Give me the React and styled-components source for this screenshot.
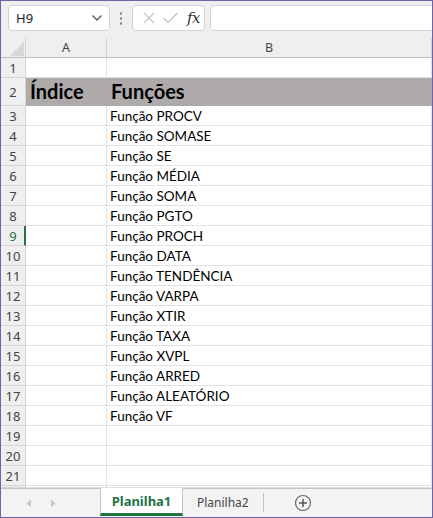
import React from "react";
import styled, { createGlobalStyle } from "styled-components";

const Global = createGlobalStyle`
  html, body { margin: 0; padding: 0; background: #fff; overflow: hidden; }
  * { box-sizing: border-box; }
`;

const UI = `"Noto Sans", "Open Sans", sans-serif`;
const CELL = `Lato, "Noto Sans", sans-serif`;

const Window = styled.div`
  width: 433px;
  height: 518px;
  border: 1px solid #6e64a8;
  background: #efefef;
  display: flex;
  flex-direction: column;
  overflow: hidden;
`;

const FormulaBar = styled.div`
  height: 37px;
  flex: none;
  display: flex;
  align-items: flex-start;
  padding: 4px 0 0 7px;
`;

const Box = styled.div`
  height: 26px;
  background: #fff;
  border: 1px solid #d3d3d3;
  border-radius: 4px;
  display: flex;
  align-items: center;
`;

const NameBox = styled(Box)`
  width: 102px;
  padding: 0 6px 0 7px;
  justify-content: space-between;
  font-family: ${UI};
  font-size: 13px;
  color: #222;
`;

const Dots = styled.div`
  width: 22px;
  height: 26px;
  display: flex;
  flex-direction: column;
  align-items: center;
  justify-content: center;
  gap: 2px;
  & > span {
    width: 2px;
    height: 3px;
    background: #8c8c8c;
    border-radius: 1px;
  }
`;

const FxBox = styled(Box)`
  width: 73px;
  padding: 0 0 0 9px;
  gap: 6px;
`;

const Fx = styled.span`
  font-family: "DejaVu Serif", "Liberation Serif", serif;
  font-style: italic;
  font-size: 15px;
  color: #333;
  margin-left: 2px;
  letter-spacing: -0.5px;
`;

const Input = styled(Box)`
  flex: 1;
  margin-left: 5px;
  margin-right: -6px;
`;

const Row = styled.div`
  display: flex;
  flex: ${(p) => (p.$fill ? "1" : "none")};
  height: ${(p) => (p.$fill ? "auto" : (p.$h || 20) + "px")};
`;

const RowHead = styled.div`
  width: 25px;
  flex: none;
  background: #efefef;
  border-right: ${(p) => (p.$sel ? "2px solid #217346" : "1px solid #d5d5d5")};
  border-bottom: 1px solid #d5d5d5;
  display: flex;
  align-items: center;
  justify-content: center;
  padding-left: ${(p) => (p.$sel ? "1px" : "0")};
  font-family: ${UI};
  font-size: 13px;
  color: ${(p) => (p.$sel ? "#217346" : "#444")};
`;

const Corner = styled(RowHead)`
  border-bottom: 1px solid #bdbdbd;
  align-items: flex-end;
  justify-content: flex-end;
  padding: 0 1px 1px 0;
`;

const ColHead = styled.div`
  width: ${(p) => (p.$w ? p.$w + "px" : "auto")};
  flex: ${(p) => (p.$w ? "none" : "1")};
  background: #efefef;
  border-right: 1px solid #d5d5d5;
  border-bottom: 1px solid #bdbdbd;
  display: flex;
  align-items: center;
  justify-content: center;
  padding-bottom: 1px;
  font-family: ${UI};
  font-size: 12.5px;
  color: #444;
`;

const Cell = styled.div`
  width: ${(p) => (p.$w ? p.$w + "px" : "auto")};
  flex: ${(p) => (p.$w ? "none" : "1")};
  background: ${(p) => (p.$fill ? "#aeaaaa" : "#fff")};
  border-right: 1px solid ${(p) => (p.$fill ? "#aeaaaa" : "#e1e1e1")};
  border-bottom: 1px solid ${(p) => (p.$fill ? "#aeaaaa" : "#e1e1e1")};
  display: flex;
  align-items: flex-end;
  padding: 0 0 ${(p) => (p.$big ? 2 : 1)}px ${(p) => (p.$big ? 4 : 3)}px;
  font-family: ${CELL};
  font-size: ${(p) => (p.$big ? 20 : 13.5)}px;
  font-weight: ${(p) => (p.$big ? 700 : 400)};
  color: #000;
  white-space: nowrap;
  overflow: hidden;
  line-height: 1.2;
`;

const Sheet = styled.div`
  flex: 1;
  min-height: 0;
  overflow: hidden;
  background: #fff;
  display: flex;
  flex-direction: column;
`;

const TabBar = styled.div`
  height: 29px;
  flex: none;
  border-top: 1px solid #c4c4c4;
  background: #f3f3f3;
  display: flex;
  align-items: stretch;
  font-family: ${UI};
  font-size: 13px;
`;

const Nav = styled.div`
  width: 99px;
  display: flex;
  align-items: center;
  padding-left: 25px;
  gap: 18px;
`;

const Tab = styled.div`
  display: flex;
  align-items: center;
  justify-content: center;
  margin-top: -1px;
  padding: 0 ${(p) => (p.$active ? 0 : 14)}px;
  width: ${(p) => (p.$active ? "83px" : "auto")};
  background: ${(p) => (p.$active ? "#fff" : "transparent")};
  border-left: ${(p) => (p.$active ? "1px solid #c4c4c4" : "none")};
  border-right: ${(p) => (p.$active ? "1px solid #c4c4c4" : "none")};
  border-bottom: ${(p) => (p.$active ? "3px solid #217346" : "none")};
  margin-bottom: ${(p) => (p.$active ? "1px" : "0")};
  color: ${(p) => (p.$active ? "#217346" : "#444")};
  font-weight: ${(p) => (p.$active ? 700 : 400)};
  font-size: ${(p) => (p.$active ? 13 : 12)}px;
`;

const Sep = styled.div`
  width: 1px;
  background: #c4c4c4;
  margin: 4px 0 5px;
`;

const AddBtn = styled.div`
  display: flex;
  align-items: center;
  padding-left: 30px;
`;

const Chevron = () => (
  <svg width="12" height="8" viewBox="0 0 12 8">
    <polyline points="1.5,1.5 6,6 10.5,1.5" fill="none" stroke="#555" strokeWidth="1.3" />
  </svg>
);

const functions = [
  "PROCV", "SOMASE", "SE", "MÉDIA", "SOMA", "PGTO", "PROCH", "DATA",
  "TENDÊNCIA", "VARPA", "XTIR", "TAXA", "XVPL", "ARRED", "ALEATÓRIO", "VF",
];

export default function App() {
  const rows = [];
  for (let i = 3; i <= 21; i++) {
    const fn = functions[i - 3];
    rows.push(
      <Row key={i}>
        <RowHead $sel={i === 9}>{i}</RowHead>
        <Cell $w={81} />
        <Cell>{fn ? `Função ${fn}` : ""}</Cell>
      </Row>
    );
  }
  return (
    <>
      <Global />
      <Window>
        <FormulaBar>
          <NameBox>
            <span>H9</span>
            <Chevron />
          </NameBox>
          <Dots>
            <span />
            <span />
            <span />
          </Dots>
          <FxBox>
            <svg width="14" height="14" viewBox="0 0 14 14">
              <path d="M2 2 L12 12 M12 2 L2 12" stroke="#c4c4c4" strokeWidth="1.3" />
            </svg>
            <svg width="17" height="14" viewBox="0 0 17 14">
              <polyline points="1.5,7 6,11.5 15.5,2" fill="none" stroke="#c4c4c4" strokeWidth="1.3" />
            </svg>
            <Fx>fx</Fx>
          </FxBox>
          <Input />
        </FormulaBar>
        <Row>
          <Corner>
            <svg width="14" height="14" viewBox="0 0 14 14">
              <polygon points="14,0 14,14 0,14" fill="#d6d6d6" />
            </svg>
          </Corner>
          <ColHead $w={81}>A</ColHead>
          <ColHead>B</ColHead>
        </Row>
        <Sheet>
          <Row>
            <RowHead>1</RowHead>
            <Cell $w={81} />
            <Cell />
          </Row>
          <Row $h={28}>
            <RowHead>2</RowHead>
            <Cell $w={81} $fill $big>Índice</Cell>
            <Cell $fill $big>Funções</Cell>
          </Row>
          {rows}
          <Row $fill>
            <RowHead />
            <Cell $w={81} />
            <Cell />
          </Row>
        </Sheet>
        <TabBar>
          <Nav>
            <svg width="6" height="9" viewBox="0 0 6 9">
              <polygon points="5,0.5 5,8.5 0.5,4.5" fill="#c8c8c8" />
            </svg>
            <svg width="6" height="9" viewBox="0 0 6 9">
              <polygon points="1,0.5 1,8.5 5.5,4.5" fill="#c8c8c8" />
            </svg>
          </Nav>
          <Tab $active>Planilha1</Tab>
          <Tab>Planilha2</Tab>
          <Sep />
          <AddBtn>
            <svg width="18" height="18" viewBox="0 0 18 18">
              <circle cx="9" cy="9" r="7.5" fill="none" stroke="#666" strokeWidth="1.2" />
              <path d="M9 5 V13 M5 9 H13" stroke="#555" strokeWidth="1.5" />
            </svg>
          </AddBtn>
        </TabBar>
      </Window>
    </>
  );
}
